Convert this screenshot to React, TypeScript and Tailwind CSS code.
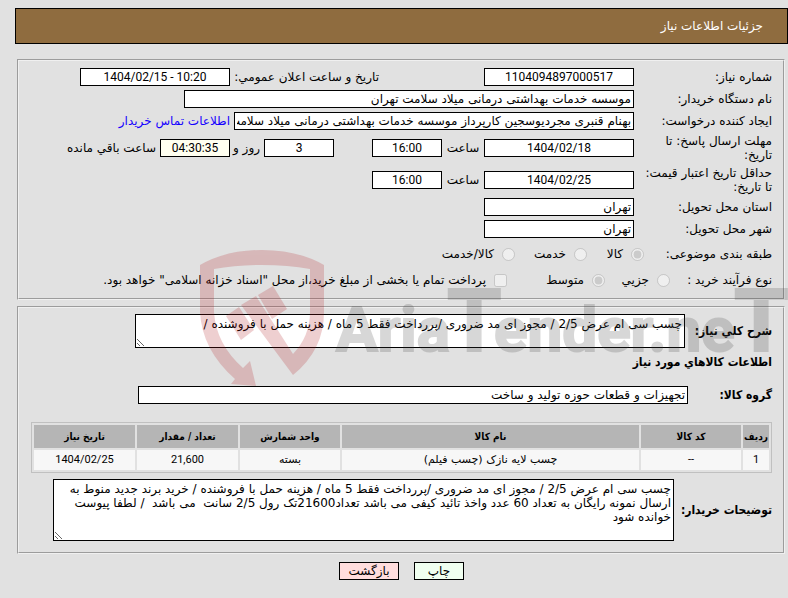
import type { InputHTMLAttributes, ReactNode } from "react";

const items = [
  { row: "1", code: "--", name: "چسب لایه نازک (چسب فیلم)", unit: "بسته", count: "21,600", date: "1404/02/25" },
];

function Field({ className, ...props }: InputHTMLAttributes<HTMLInputElement>) {
  return (
    <input readOnly className={`h-[18px] shrink-0 border border-black px-[2px] ${className ?? ""}`} {...props} />
  );
}

// Centred field for codes, dates and times
function NumberField({ className, ...props }: InputHTMLAttributes<HTMLInputElement>) {
  return <Field dir="ltr" className={`text-center font-[Roboto,sans-serif] ${className ?? ""}`} {...props} />;
}

function Row({ id, label, tall, children }: { id: string; label: string; tall?: boolean; children: ReactNode }) {
  return (
    <div className={`flex items-center ${tall ? "h-8" : "h-[22px]"}`}>
      <label htmlFor={id} className="w-[138px] shrink-0 pe-1">
        {label}
      </label>
      {children}
    </div>
  );
}

function Watermark() {
  return (
    <svg
      className="pointer-events-none absolute top-[245px] left-[196px]"
      width="592"
      height="145"
      viewBox="196 245 592 145"
      direction="ltr"
      aria-hidden="true"
    >
      <g fill="#b0141a" opacity="0.2">
        <path d="M200 265 Q226 250 262 250 Q298 250 324 265 V312 Q324 350 293 375 L241 305 L256 296 L293 354 Q310 336 310 312 V269 Q288 265 262 265 Q236 265 214 269 V312 Q216 344 243 368 L250 361 L256 386 L231 384 L235 379 Q202 350 200 312 Z" />
        <path d="M226 316 L239 307 L254 330 L241 340 Z" />
        <path d="M258 295 L273 286 L287 309 L272 319 Z" />
      </g>
      <g
        opacity="0.2"
        fill="#3c3c3c"
        stroke="#3c3c3c"
        strokeWidth="2"
        fontFamily="Roboto, sans-serif"
        fontWeight="700"
        fontSize="62"
      >
        <text x="336" y="351">
          Aria
        </text>
        <text x="447" y="351" fontSize="88">
          T
        </text>
        <text x="494" y="351">
          ender.ne
        </text>
        <text x="734" y="351" fontSize="88">
          T
        </text>
      </g>
    </svg>
  );
}

export default function App() {
  return (
    <main
      dir="rtl"
      className="relative min-h-screen overflow-hidden bg-[#e1e1e1] pt-2 pb-[18px] pl-[15px] font-['DejaVu_Sans',sans-serif] text-[12px] leading-[14px] text-black"
    >
      <header className="flex h-9 items-center border border-black bg-[#8f6c3f] px-6 text-white">
        <h1>جزئیات اطلاعات نیاز</h1>
      </header>

      {/* Request details */}
      <fieldset className="mt-[15px] mr-[3px] ml-[2px] border-2 border-[#f0f0f0] [border-style:groove] pt-[5px] pr-[11px] pb-[6px]">
        <Row id="number" label="شماره نیاز:">
          <NumberField id="number" className="w-[150px] bg-white" defaultValue="1104094897000517" />
          <label htmlFor="announced" className="ms-[105px] w-[149px] shrink-0 whitespace-nowrap">
            تاریخ و ساعت اعلان عمومي:
          </label>
          <NumberField id="announced" className="w-[150px] bg-white" defaultValue="1404/02/15 - 10:20" />
        </Row>
        <Row id="buyer" label="نام دستگاه خریدار:">
          <Field id="buyer" className="w-[450px] bg-white" defaultValue="موسسه خدمات بهداشتی درمانی میلاد سلامت تهران" />
        </Row>
        <Row id="creator" label="ایجاد کننده درخواست:">
          <Field
            id="creator"
            className="w-[400px] bg-white"
            defaultValue="بهنام قنبری مجردیوسجین کارپرداز موسسه خدمات بهداشتی درمانی میلاد سلامت تهران"
          />
          <a href="#contact" className="ms-1 text-[#1500ff]">
            اطلاعات تماس خریدار
          </a>
        </Row>
        <Row id="deadline" tall label="مهلت ارسال پاسخ: تا تاریخ:">
          <NumberField id="deadline" className="w-[150px] bg-white" defaultValue="1404/02/18" />
          <label htmlFor="deadlineTime" className="w-[42px] shrink-0 text-center">
            ساعت
          </label>
          <NumberField id="deadlineTime" className="w-[70px] bg-white" defaultValue="16:00" />
          <NumberField id="days" className="mr-[38px] w-[70px] bg-white" defaultValue="3" />
          <label htmlFor="days" className="w-[34px] shrink-0 ps-1">
            روز و
          </label>
          <NumberField id="remaining" className="w-[70px] bg-[#fffff0]" defaultValue="04:30:35" />
          <label htmlFor="remaining" className="ms-1 whitespace-nowrap">
            ساعت باقي مانده
          </label>
        </Row>
        <Row id="validity" tall label="حداقل تاریخ اعتبار قیمت: تا تاریخ:">
          <NumberField id="validity" className="w-[150px] bg-white" defaultValue="1404/02/25" />
          <label htmlFor="validityTime" className="w-[42px] shrink-0 text-center">
            ساعت
          </label>
          <NumberField id="validityTime" className="w-[70px] bg-white" defaultValue="16:00" />
        </Row>
        <Row id="province" label="استان محل تحویل:">
          <Field id="province" className="w-[150px] bg-white" defaultValue="تهران" />
        </Row>
        <Row id="city" label="شهر محل تحویل:">
          <Field id="city" className="w-[150px] bg-white" defaultValue="تهران" />
        </Row>

        <div role="radiogroup" aria-labelledby="subject" className="flex h-7 items-center whitespace-nowrap">
          <span id="subject" className="w-32 shrink-0">
            طبقه بندی موضوعی:
          </span>
          <label className="flex w-[57px] shrink-0 items-center gap-2">
            <input type="radio" name="subject" disabled defaultChecked />
            کالا
          </label>
          <label className="flex w-[72px] shrink-0 items-center gap-2">
            <input type="radio" name="subject" disabled />
            خدمت
          </label>
          <label className="flex shrink-0 items-center gap-2">
            <input type="radio" name="subject" disabled />
            کالا/خدمت
          </label>
        </div>
        <div role="group" aria-labelledby="process" className="flex h-6 items-center whitespace-nowrap">
          <span id="process" className="w-[102px] shrink-0">
            نوع فرآیند خرید :
          </span>
          <label className="flex w-[65px] shrink-0 items-center gap-2">
            <input type="radio" name="process" disabled />
            جزیي
          </label>
          <label className="flex w-[98px] shrink-0 items-center gap-2">
            <input type="radio" name="process" disabled defaultChecked />
            متوسط
          </label>
          <label className="flex shrink-0 items-center gap-2">
            <input type="checkbox" disabled />
            پرداخت تمام یا بخشی از مبلغ خرید،از محل "اسناد خزانه اسلامی" خواهد بود.
          </label>
        </div>
      </fieldset>

      {/* Goods */}
      <fieldset className="mt-[6px] mr-[3px] ml-[2px] border-2 border-[#f0f0f0] [border-style:groove] pt-[6px] pr-[11px] pb-[11px] pl-3">
        <div className="flex items-center">
          <label
            htmlFor="summary"
            className="w-[87px] shrink-0 font-['DejaVu_Sans_Condensed','DejaVu_Sans',sans-serif] font-bold"
          >
            شرح کلي نیاز:
          </label>
          <textarea
            id="summary"
            readOnly
            className="h-[34px] w-[550px] overflow-hidden border border-black bg-white p-[2px]"
            defaultValue="چسب سی ام عرض 2/5 / مجوز ای مد ضروری /پررداخت فقط 5 ماه / هزینه حمل با فروشنده /"
          />
        </div>
        <h2 className="mt-[7px] font-['DejaVu_Sans_Condensed','DejaVu_Sans',sans-serif] font-bold">
          اطلاعات کالاهاي مورد نیاز
        </h2>
        <div className="mt-[17px] flex items-center">
          <label
            htmlFor="group"
            className="w-[84px] shrink-0 font-['DejaVu_Sans_Condensed','DejaVu_Sans',sans-serif] font-bold"
          >
            گروه کالا:
          </label>
          <Field id="group" className="w-[550px] bg-white" defaultValue="تجهیزات و قطعات حوزه تولید و ساخت" />
        </div>

        <table className="mt-[18px] w-full table-fixed border-separate border-spacing-[2px] border border-[#c0c0c0] text-center">
          <colgroup>
            <col className="w-[26px]" />
            <col className="w-[100px]" />
            <col />
            <col className="w-[100px]" />
            <col className="w-[101px]" />
            <col className="w-[101px]" />
          </colgroup>
          <thead>
            <tr className="h-[23px] bg-[#b5b5b5] font-['DejaVu_Sans_Condensed','DejaVu_Sans',sans-serif] text-[10px]">
              <th>ردیف</th>
              <th>کد کالا</th>
              <th>نام کالا</th>
              <th>واحد شمارش</th>
              <th>تعداد / مقدار</th>
              <th>تاریخ نیاز</th>
            </tr>
          </thead>
          <tbody>
            {items.map((item) => (
              <tr key={item.row} className="h-5 bg-[#f7f7f7] text-[11px]">
                <td className="font-[Roboto,sans-serif]">{item.row}</td>
                <td className="font-[Roboto,sans-serif]">{item.code}</td>
                <td>{item.name}</td>
                <td>{item.unit}</td>
                <td className="font-[Roboto,sans-serif]">{item.count}</td>
                <td className="font-[Roboto,sans-serif]">{item.date}</td>
              </tr>
            ))}
          </tbody>
        </table>

        <div className="mt-[6px] flex items-center">
          <label
            htmlFor="notes"
            className="w-[98px] shrink-0 font-['DejaVu_Sans_Condensed','DejaVu_Sans',sans-serif] font-bold"
          >
            توضیحات خریدار:
          </label>
          <textarea
            id="notes"
            readOnly
            className="h-[62px] w-[621px] overflow-hidden border border-black bg-white p-[2px]"
            defaultValue="چسب سی ام عرض 2/5 / مجوز ای مد ضروری /پررداخت فقط 5 ماه / هزینه حمل با فروشنده / خرید برند جدید منوط به ارسال نمونه رایگان به تعداد 60 عدد واخذ تائید کیفی می باشد تعداد21600تک رول 2/5 سانت  می باشد  / لطفا پیوست خوانده شود"
          />
        </div>
      </fieldset>

      <div className="mt-2 flex justify-center gap-[15px]">
        <button type="button" className="h-[18px] w-[50px] border border-black bg-[#f0fff0]">
          چاپ
        </button>
        <button type="button" className="h-[18px] w-[60px] border border-black bg-[#ffdddd]">
          بازگشت
        </button>
      </div>

      <Watermark />
    </main>
  );
}
